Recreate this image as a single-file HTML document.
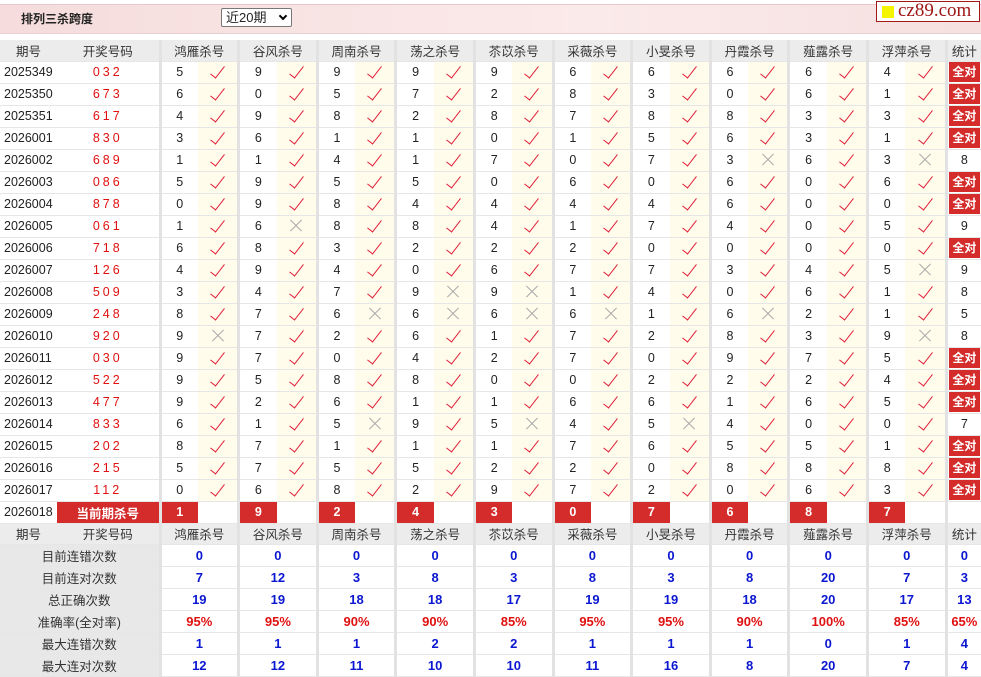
<!DOCTYPE html>
<html><head><meta charset="utf-8">
<style>
*{margin:0;padding:0;box-sizing:border-box}
body{width:981px;height:677px;background:#fff;font-family:"Liberation Sans","Noto Sans CJK SC",sans-serif;font-size:12px;color:#222;position:relative;overflow:hidden}
.top{position:absolute;left:0;top:4px;width:981px;height:30px;background:linear-gradient(90deg,#f6dcdc,#fbeaea 60%,#f6e0e0);border-top:1px solid #e8c8c8;border-bottom:1px solid #ead0d0}
.title{position:absolute;left:21px;top:10px;font-weight:bold;font-size:12px;color:#222}
.sel{position:absolute;left:221px;top:8px;width:71px;height:19px;border:1px solid #777;border-radius:2px;background:#fff;font-size:13px;padding-left:4px;line-height:17px}
.sel b{position:absolute;right:5px;top:4px;width:6px;height:6px;border-right:2px solid #000;border-bottom:2px solid #000;transform:rotate(45deg)}
.logo{position:absolute;left:876px;top:1px;width:104px;height:21px;border:1px solid #a01818;background:#fff;font-family:"Liberation Serif",serif;font-size:19px;color:#a01818;line-height:18px;padding-left:21px}
.logo i{position:absolute;left:5px;top:4px;width:12px;height:12px;background:#f5f500}
table{position:absolute;left:0;top:40px;border-collapse:collapse;table-layout:fixed;width:981px}
td{height:22px;text-align:center;border-bottom:1px solid #e6e6e6;padding:0;font-size:12.5px;white-space:nowrap;overflow:hidden}
tr.h td{background:#ececec;height:21px;color:#333;font-size:12.5px}
td.p{text-align:left;padding-left:4px;color:#222}
td.k{color:#e01010;letter-spacing:3px}
td.n{border-left:3px solid #e2e2e2}
td.c{background:#fffcec}
tr.h td.n{border-left:3px solid #e2e2e2}
.y{display:inline-block;width:7px;height:15px;border-right:1.6px solid #e0203a;border-bottom:1.6px solid #e0203a;transform:rotate(38deg);margin-top:-4px;vertical-align:middle}
.x{display:inline-block;width:14px;height:14px;position:relative;vertical-align:middle}
.x:before,.x:after{content:"";position:absolute;left:-1px;top:6px;width:16px;height:1px;background:#aaa;transform:rotate(45deg)}
.x:after{transform:rotate(-45deg)}
.q{background:#d42b2b;color:#fff;font-weight:bold;font-size:12px;display:block;height:20px;line-height:20px;margin:0 1px}
td.s{color:#222}
td.r{background:#d42b2b;color:#fff;font-weight:bold}
td.cur{background:#d42b2b;color:#fff;font-weight:bold}
td.L{background:#e8e8e8;color:#333}
td.b{color:#0b17d0;font-weight:bold;font-size:13px}
td.pr{color:#e01010;font-weight:bold;font-size:13px}
</style></head><body>
<div class="top"></div>
<div class="title">排列三杀跨度</div>
<div class="sel">近20期<b></b></div>
<div class="logo"><i></i>cz89.com</div>
<table>
<colgroup><col style="width:57px"><col style="width:103px">
<col style="width:38px"><col style="width:40.6px"><col style="width:38px"><col style="width:40.6px"><col style="width:38px"><col style="width:40.6px"><col style="width:38px"><col style="width:40.6px"><col style="width:38px"><col style="width:40.6px"><col style="width:38px"><col style="width:40.6px"><col style="width:38px"><col style="width:40.6px"><col style="width:38px"><col style="width:40.6px"><col style="width:38px"><col style="width:40.6px"><col style="width:38px"><col style="width:40.6px">
<col style="width:35px"></colgroup>
<tr class="h"><td>期号</td><td>开奖号码</td><td class="n" colspan="2">鸿雁杀号</td><td class="n" colspan="2">谷风杀号</td><td class="n" colspan="2">周南杀号</td><td class="n" colspan="2">荡之杀号</td><td class="n" colspan="2">苶苡杀号</td><td class="n" colspan="2">采薇杀号</td><td class="n" colspan="2">小旻杀号</td><td class="n" colspan="2">丹霞杀号</td><td class="n" colspan="2">薤露杀号</td><td class="n" colspan="2">浮萍杀号</td><td class="n">统计</td></tr>
<tr><td class="p">2025349</td><td class="k">032</td><td class="n">5</td><td class="c"><i class="y"></i></td><td class="n">9</td><td class="c"><i class="y"></i></td><td class="n">9</td><td class="c"><i class="y"></i></td><td class="n">9</td><td class="c"><i class="y"></i></td><td class="n">9</td><td class="c"><i class="y"></i></td><td class="n">6</td><td class="c"><i class="y"></i></td><td class="n">6</td><td class="c"><i class="y"></i></td><td class="n">6</td><td class="c"><i class="y"></i></td><td class="n">6</td><td class="c"><i class="y"></i></td><td class="n">4</td><td class="c"><i class="y"></i></td><td class="n"><span class="q">全对</span></td></tr>
<tr><td class="p">2025350</td><td class="k">673</td><td class="n">6</td><td class="c"><i class="y"></i></td><td class="n">0</td><td class="c"><i class="y"></i></td><td class="n">5</td><td class="c"><i class="y"></i></td><td class="n">7</td><td class="c"><i class="y"></i></td><td class="n">2</td><td class="c"><i class="y"></i></td><td class="n">8</td><td class="c"><i class="y"></i></td><td class="n">3</td><td class="c"><i class="y"></i></td><td class="n">0</td><td class="c"><i class="y"></i></td><td class="n">6</td><td class="c"><i class="y"></i></td><td class="n">1</td><td class="c"><i class="y"></i></td><td class="n"><span class="q">全对</span></td></tr>
<tr><td class="p">2025351</td><td class="k">617</td><td class="n">4</td><td class="c"><i class="y"></i></td><td class="n">9</td><td class="c"><i class="y"></i></td><td class="n">8</td><td class="c"><i class="y"></i></td><td class="n">2</td><td class="c"><i class="y"></i></td><td class="n">8</td><td class="c"><i class="y"></i></td><td class="n">7</td><td class="c"><i class="y"></i></td><td class="n">8</td><td class="c"><i class="y"></i></td><td class="n">8</td><td class="c"><i class="y"></i></td><td class="n">3</td><td class="c"><i class="y"></i></td><td class="n">3</td><td class="c"><i class="y"></i></td><td class="n"><span class="q">全对</span></td></tr>
<tr><td class="p">2026001</td><td class="k">830</td><td class="n">3</td><td class="c"><i class="y"></i></td><td class="n">6</td><td class="c"><i class="y"></i></td><td class="n">1</td><td class="c"><i class="y"></i></td><td class="n">1</td><td class="c"><i class="y"></i></td><td class="n">0</td><td class="c"><i class="y"></i></td><td class="n">1</td><td class="c"><i class="y"></i></td><td class="n">5</td><td class="c"><i class="y"></i></td><td class="n">6</td><td class="c"><i class="y"></i></td><td class="n">3</td><td class="c"><i class="y"></i></td><td class="n">1</td><td class="c"><i class="y"></i></td><td class="n"><span class="q">全对</span></td></tr>
<tr><td class="p">2026002</td><td class="k">689</td><td class="n">1</td><td class="c"><i class="y"></i></td><td class="n">1</td><td class="c"><i class="y"></i></td><td class="n">4</td><td class="c"><i class="y"></i></td><td class="n">1</td><td class="c"><i class="y"></i></td><td class="n">7</td><td class="c"><i class="y"></i></td><td class="n">0</td><td class="c"><i class="y"></i></td><td class="n">7</td><td class="c"><i class="y"></i></td><td class="n">3</td><td class="c"><i class="x"></i></td><td class="n">6</td><td class="c"><i class="y"></i></td><td class="n">3</td><td class="c"><i class="x"></i></td><td class="n s">8</td></tr>
<tr><td class="p">2026003</td><td class="k">086</td><td class="n">5</td><td class="c"><i class="y"></i></td><td class="n">9</td><td class="c"><i class="y"></i></td><td class="n">5</td><td class="c"><i class="y"></i></td><td class="n">5</td><td class="c"><i class="y"></i></td><td class="n">0</td><td class="c"><i class="y"></i></td><td class="n">6</td><td class="c"><i class="y"></i></td><td class="n">0</td><td class="c"><i class="y"></i></td><td class="n">6</td><td class="c"><i class="y"></i></td><td class="n">0</td><td class="c"><i class="y"></i></td><td class="n">6</td><td class="c"><i class="y"></i></td><td class="n"><span class="q">全对</span></td></tr>
<tr><td class="p">2026004</td><td class="k">878</td><td class="n">0</td><td class="c"><i class="y"></i></td><td class="n">9</td><td class="c"><i class="y"></i></td><td class="n">8</td><td class="c"><i class="y"></i></td><td class="n">4</td><td class="c"><i class="y"></i></td><td class="n">4</td><td class="c"><i class="y"></i></td><td class="n">4</td><td class="c"><i class="y"></i></td><td class="n">4</td><td class="c"><i class="y"></i></td><td class="n">6</td><td class="c"><i class="y"></i></td><td class="n">0</td><td class="c"><i class="y"></i></td><td class="n">0</td><td class="c"><i class="y"></i></td><td class="n"><span class="q">全对</span></td></tr>
<tr><td class="p">2026005</td><td class="k">061</td><td class="n">1</td><td class="c"><i class="y"></i></td><td class="n">6</td><td class="c"><i class="x"></i></td><td class="n">8</td><td class="c"><i class="y"></i></td><td class="n">8</td><td class="c"><i class="y"></i></td><td class="n">4</td><td class="c"><i class="y"></i></td><td class="n">1</td><td class="c"><i class="y"></i></td><td class="n">7</td><td class="c"><i class="y"></i></td><td class="n">4</td><td class="c"><i class="y"></i></td><td class="n">0</td><td class="c"><i class="y"></i></td><td class="n">5</td><td class="c"><i class="y"></i></td><td class="n s">9</td></tr>
<tr><td class="p">2026006</td><td class="k">718</td><td class="n">6</td><td class="c"><i class="y"></i></td><td class="n">8</td><td class="c"><i class="y"></i></td><td class="n">3</td><td class="c"><i class="y"></i></td><td class="n">2</td><td class="c"><i class="y"></i></td><td class="n">2</td><td class="c"><i class="y"></i></td><td class="n">2</td><td class="c"><i class="y"></i></td><td class="n">0</td><td class="c"><i class="y"></i></td><td class="n">0</td><td class="c"><i class="y"></i></td><td class="n">0</td><td class="c"><i class="y"></i></td><td class="n">0</td><td class="c"><i class="y"></i></td><td class="n"><span class="q">全对</span></td></tr>
<tr><td class="p">2026007</td><td class="k">126</td><td class="n">4</td><td class="c"><i class="y"></i></td><td class="n">9</td><td class="c"><i class="y"></i></td><td class="n">4</td><td class="c"><i class="y"></i></td><td class="n">0</td><td class="c"><i class="y"></i></td><td class="n">6</td><td class="c"><i class="y"></i></td><td class="n">7</td><td class="c"><i class="y"></i></td><td class="n">7</td><td class="c"><i class="y"></i></td><td class="n">3</td><td class="c"><i class="y"></i></td><td class="n">4</td><td class="c"><i class="y"></i></td><td class="n">5</td><td class="c"><i class="x"></i></td><td class="n s">9</td></tr>
<tr><td class="p">2026008</td><td class="k">509</td><td class="n">3</td><td class="c"><i class="y"></i></td><td class="n">4</td><td class="c"><i class="y"></i></td><td class="n">7</td><td class="c"><i class="y"></i></td><td class="n">9</td><td class="c"><i class="x"></i></td><td class="n">9</td><td class="c"><i class="x"></i></td><td class="n">1</td><td class="c"><i class="y"></i></td><td class="n">4</td><td class="c"><i class="y"></i></td><td class="n">0</td><td class="c"><i class="y"></i></td><td class="n">6</td><td class="c"><i class="y"></i></td><td class="n">1</td><td class="c"><i class="y"></i></td><td class="n s">8</td></tr>
<tr><td class="p">2026009</td><td class="k">248</td><td class="n">8</td><td class="c"><i class="y"></i></td><td class="n">7</td><td class="c"><i class="y"></i></td><td class="n">6</td><td class="c"><i class="x"></i></td><td class="n">6</td><td class="c"><i class="x"></i></td><td class="n">6</td><td class="c"><i class="x"></i></td><td class="n">6</td><td class="c"><i class="x"></i></td><td class="n">1</td><td class="c"><i class="y"></i></td><td class="n">6</td><td class="c"><i class="x"></i></td><td class="n">2</td><td class="c"><i class="y"></i></td><td class="n">1</td><td class="c"><i class="y"></i></td><td class="n s">5</td></tr>
<tr><td class="p">2026010</td><td class="k">920</td><td class="n">9</td><td class="c"><i class="x"></i></td><td class="n">7</td><td class="c"><i class="y"></i></td><td class="n">2</td><td class="c"><i class="y"></i></td><td class="n">6</td><td class="c"><i class="y"></i></td><td class="n">1</td><td class="c"><i class="y"></i></td><td class="n">7</td><td class="c"><i class="y"></i></td><td class="n">2</td><td class="c"><i class="y"></i></td><td class="n">8</td><td class="c"><i class="y"></i></td><td class="n">3</td><td class="c"><i class="y"></i></td><td class="n">9</td><td class="c"><i class="x"></i></td><td class="n s">8</td></tr>
<tr><td class="p">2026011</td><td class="k">030</td><td class="n">9</td><td class="c"><i class="y"></i></td><td class="n">7</td><td class="c"><i class="y"></i></td><td class="n">0</td><td class="c"><i class="y"></i></td><td class="n">4</td><td class="c"><i class="y"></i></td><td class="n">2</td><td class="c"><i class="y"></i></td><td class="n">7</td><td class="c"><i class="y"></i></td><td class="n">0</td><td class="c"><i class="y"></i></td><td class="n">9</td><td class="c"><i class="y"></i></td><td class="n">7</td><td class="c"><i class="y"></i></td><td class="n">5</td><td class="c"><i class="y"></i></td><td class="n"><span class="q">全对</span></td></tr>
<tr><td class="p">2026012</td><td class="k">522</td><td class="n">9</td><td class="c"><i class="y"></i></td><td class="n">5</td><td class="c"><i class="y"></i></td><td class="n">8</td><td class="c"><i class="y"></i></td><td class="n">8</td><td class="c"><i class="y"></i></td><td class="n">0</td><td class="c"><i class="y"></i></td><td class="n">0</td><td class="c"><i class="y"></i></td><td class="n">2</td><td class="c"><i class="y"></i></td><td class="n">2</td><td class="c"><i class="y"></i></td><td class="n">2</td><td class="c"><i class="y"></i></td><td class="n">4</td><td class="c"><i class="y"></i></td><td class="n"><span class="q">全对</span></td></tr>
<tr><td class="p">2026013</td><td class="k">477</td><td class="n">9</td><td class="c"><i class="y"></i></td><td class="n">2</td><td class="c"><i class="y"></i></td><td class="n">6</td><td class="c"><i class="y"></i></td><td class="n">1</td><td class="c"><i class="y"></i></td><td class="n">1</td><td class="c"><i class="y"></i></td><td class="n">6</td><td class="c"><i class="y"></i></td><td class="n">6</td><td class="c"><i class="y"></i></td><td class="n">1</td><td class="c"><i class="y"></i></td><td class="n">6</td><td class="c"><i class="y"></i></td><td class="n">5</td><td class="c"><i class="y"></i></td><td class="n"><span class="q">全对</span></td></tr>
<tr><td class="p">2026014</td><td class="k">833</td><td class="n">6</td><td class="c"><i class="y"></i></td><td class="n">1</td><td class="c"><i class="y"></i></td><td class="n">5</td><td class="c"><i class="x"></i></td><td class="n">9</td><td class="c"><i class="y"></i></td><td class="n">5</td><td class="c"><i class="x"></i></td><td class="n">4</td><td class="c"><i class="y"></i></td><td class="n">5</td><td class="c"><i class="x"></i></td><td class="n">4</td><td class="c"><i class="y"></i></td><td class="n">0</td><td class="c"><i class="y"></i></td><td class="n">0</td><td class="c"><i class="y"></i></td><td class="n s">7</td></tr>
<tr><td class="p">2026015</td><td class="k">202</td><td class="n">8</td><td class="c"><i class="y"></i></td><td class="n">7</td><td class="c"><i class="y"></i></td><td class="n">1</td><td class="c"><i class="y"></i></td><td class="n">1</td><td class="c"><i class="y"></i></td><td class="n">1</td><td class="c"><i class="y"></i></td><td class="n">7</td><td class="c"><i class="y"></i></td><td class="n">6</td><td class="c"><i class="y"></i></td><td class="n">5</td><td class="c"><i class="y"></i></td><td class="n">5</td><td class="c"><i class="y"></i></td><td class="n">1</td><td class="c"><i class="y"></i></td><td class="n"><span class="q">全对</span></td></tr>
<tr><td class="p">2026016</td><td class="k">215</td><td class="n">5</td><td class="c"><i class="y"></i></td><td class="n">7</td><td class="c"><i class="y"></i></td><td class="n">5</td><td class="c"><i class="y"></i></td><td class="n">5</td><td class="c"><i class="y"></i></td><td class="n">2</td><td class="c"><i class="y"></i></td><td class="n">2</td><td class="c"><i class="y"></i></td><td class="n">0</td><td class="c"><i class="y"></i></td><td class="n">8</td><td class="c"><i class="y"></i></td><td class="n">8</td><td class="c"><i class="y"></i></td><td class="n">8</td><td class="c"><i class="y"></i></td><td class="n"><span class="q">全对</span></td></tr>
<tr><td class="p">2026017</td><td class="k">112</td><td class="n">0</td><td class="c"><i class="y"></i></td><td class="n">6</td><td class="c"><i class="y"></i></td><td class="n">8</td><td class="c"><i class="y"></i></td><td class="n">2</td><td class="c"><i class="y"></i></td><td class="n">9</td><td class="c"><i class="y"></i></td><td class="n">7</td><td class="c"><i class="y"></i></td><td class="n">2</td><td class="c"><i class="y"></i></td><td class="n">0</td><td class="c"><i class="y"></i></td><td class="n">6</td><td class="c"><i class="y"></i></td><td class="n">3</td><td class="c"><i class="y"></i></td><td class="n"><span class="q">全对</span></td></tr>
<tr><td class="p">2026018</td><td class="cur">当前期杀号</td><td class="n r">1</td><td></td><td class="n r">9</td><td></td><td class="n r">2</td><td></td><td class="n r">4</td><td></td><td class="n r">3</td><td></td><td class="n r">0</td><td></td><td class="n r">7</td><td></td><td class="n r">6</td><td></td><td class="n r">8</td><td></td><td class="n r">7</td><td></td><td class="n"></td></tr>
<tr class="h"><td>期号</td><td>开奖号码</td><td class="n" colspan="2">鸿雁杀号</td><td class="n" colspan="2">谷风杀号</td><td class="n" colspan="2">周南杀号</td><td class="n" colspan="2">荡之杀号</td><td class="n" colspan="2">苶苡杀号</td><td class="n" colspan="2">采薇杀号</td><td class="n" colspan="2">小旻杀号</td><td class="n" colspan="2">丹霞杀号</td><td class="n" colspan="2">薤露杀号</td><td class="n" colspan="2">浮萍杀号</td><td class="n">统计</td></tr>
<tr><td class="L" colspan="2">目前连错次数</td><td class="n b" colspan="2">0</td><td class="n b" colspan="2">0</td><td class="n b" colspan="2">0</td><td class="n b" colspan="2">0</td><td class="n b" colspan="2">0</td><td class="n b" colspan="2">0</td><td class="n b" colspan="2">0</td><td class="n b" colspan="2">0</td><td class="n b" colspan="2">0</td><td class="n b" colspan="2">0</td><td class="n b">0</td></tr>
<tr><td class="L" colspan="2">目前连对次数</td><td class="n b" colspan="2">7</td><td class="n b" colspan="2">12</td><td class="n b" colspan="2">3</td><td class="n b" colspan="2">8</td><td class="n b" colspan="2">3</td><td class="n b" colspan="2">8</td><td class="n b" colspan="2">3</td><td class="n b" colspan="2">8</td><td class="n b" colspan="2">20</td><td class="n b" colspan="2">7</td><td class="n b">3</td></tr>
<tr><td class="L" colspan="2">总正确次数</td><td class="n b" colspan="2">19</td><td class="n b" colspan="2">19</td><td class="n b" colspan="2">18</td><td class="n b" colspan="2">18</td><td class="n b" colspan="2">17</td><td class="n b" colspan="2">19</td><td class="n b" colspan="2">19</td><td class="n b" colspan="2">18</td><td class="n b" colspan="2">20</td><td class="n b" colspan="2">17</td><td class="n b">13</td></tr>
<tr><td class="L" colspan="2">准确率(全对率)</td><td class="n pr" colspan="2">95%</td><td class="n pr" colspan="2">95%</td><td class="n pr" colspan="2">90%</td><td class="n pr" colspan="2">90%</td><td class="n pr" colspan="2">85%</td><td class="n pr" colspan="2">95%</td><td class="n pr" colspan="2">95%</td><td class="n pr" colspan="2">90%</td><td class="n pr" colspan="2">100%</td><td class="n pr" colspan="2">85%</td><td class="n pr">65%</td></tr>
<tr><td class="L" colspan="2">最大连错次数</td><td class="n b" colspan="2">1</td><td class="n b" colspan="2">1</td><td class="n b" colspan="2">1</td><td class="n b" colspan="2">2</td><td class="n b" colspan="2">2</td><td class="n b" colspan="2">1</td><td class="n b" colspan="2">1</td><td class="n b" colspan="2">1</td><td class="n b" colspan="2">0</td><td class="n b" colspan="2">1</td><td class="n b">4</td></tr>
<tr><td class="L" colspan="2">最大连对次数</td><td class="n b" colspan="2">12</td><td class="n b" colspan="2">12</td><td class="n b" colspan="2">11</td><td class="n b" colspan="2">10</td><td class="n b" colspan="2">10</td><td class="n b" colspan="2">11</td><td class="n b" colspan="2">16</td><td class="n b" colspan="2">8</td><td class="n b" colspan="2">20</td><td class="n b" colspan="2">7</td><td class="n b">4</td></tr>
</table>
</body></html>
